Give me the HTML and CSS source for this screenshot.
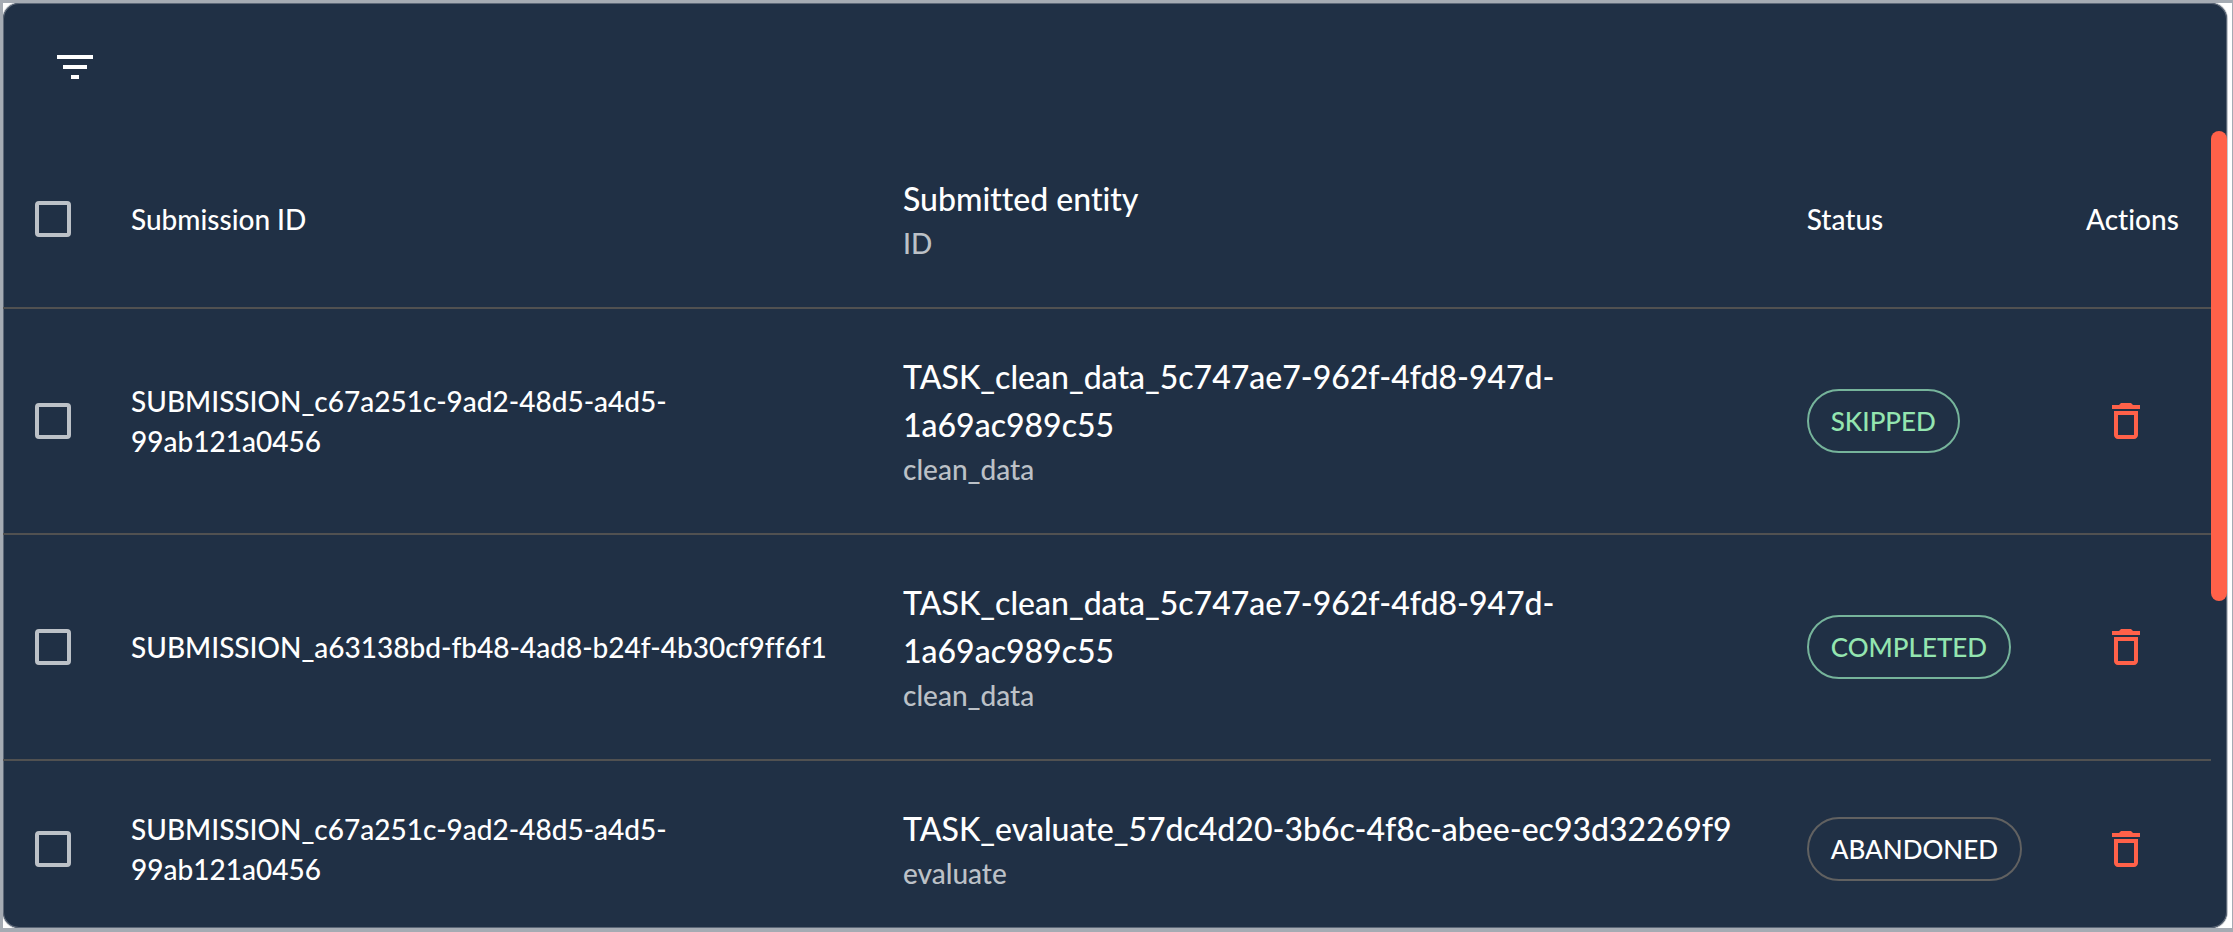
FILE: index.html
```
<!DOCTYPE html>
<html lang="en">
<head>
<meta charset="utf-8">
<title>Submissions</title>
<link rel="stylesheet" href="styles.css">
</head>
<body>
<svg class="sprite" aria-hidden="true">
  <symbol id="filter" viewBox="0 0 24 24"><path d="M10 18h4v-2h-4v2zM3 6v2h18V6H3zm3 7h12v-2H6v2z"/></symbol>
  <symbol id="trash" viewBox="0 0 24 24"><path d="M6 19c0 1.100.9 2 2 2h8c1.100 0 2-.9 2-2V7H6v12zM8 9h8v10H8V9zm7.500-5l-1-1h-5l-1 1H5v2h14V4z"/></symbol>
</svg>
<main class="card">
  <div class="toolbar">
    <button class="icon-button" type="button" aria-label="Filter list"><svg class="icon"><use href="#filter"/></svg></button>
  </div>
  <div class="scroller">
    <table class="table">
      <colgroup><col class="col-check"><col class="col-id"><col class="col-entity"><col class="col-status"><col class="col-actions"></colgroup>
      <thead>
        <tr>
          <th class="check-cell"><input class="checkbox" type="checkbox" aria-label="Select all submissions"></th>
          <th>Submission ID</th>
          <th><span class="primary">Submitted entity</span><span class="secondary">ID</span></th>
          <th>Status</th>
          <th>Actions</th>
        </tr>
      </thead>
      <tbody>
        <tr>
          <td class="check-cell"><input class="checkbox" type="checkbox" aria-label="Select submission 1"></td>
          <td>SUBMISSION_c67a251c-9ad2-48d5-a4d5-99ab121a0456</td>
          <td><span class="primary">TASK_clean_data_5c747ae7-962f-4fd8-947d-1a69ac989c55</span><span class="secondary">clean_data</span></td>
          <td><span class="chip chip-success">SKIPPED</span></td>
          <td><button class="icon-button danger" type="button" aria-label="Delete submission 1"><svg class="icon"><use href="#trash"/></svg></button></td>
        </tr>
        <tr>
          <td class="check-cell"><input class="checkbox" type="checkbox" aria-label="Select submission 2"></td>
          <td>SUBMISSION_a63138bd-fb48-4ad8-b24f-4b30cf9ff6f1</td>
          <td><span class="primary">TASK_clean_data_5c747ae7-962f-4fd8-947d-1a69ac989c55</span><span class="secondary">clean_data</span></td>
          <td><span class="chip chip-success">COMPLETED</span></td>
          <td><button class="icon-button danger" type="button" aria-label="Delete submission 2"><svg class="icon"><use href="#trash"/></svg></button></td>
        </tr>
        <tr>
          <td class="check-cell"><input class="checkbox" type="checkbox" aria-label="Select submission 3"></td>
          <td>SUBMISSION_c67a251c-9ad2-48d5-a4d5-99ab121a0456</td>
          <td><span class="primary">TASK_evaluate_57dc4d20-3b6c-4f8c-abee-ec93d32269f9</span><span class="secondary">evaluate</span></td>
          <td><span class="chip">ABANDONED</span></td>
          <td><button class="icon-button danger" type="button" aria-label="Delete submission 3"><svg class="icon"><use href="#trash"/></svg></button></td>
        </tr>
      </tbody>
    </table>
    <div class="scrollbar"><div class="thumb"></div></div>
  </div>
</main>
</body>
</html>
```
FILE: styles.css
```
* { box-sizing: border-box; }
html { background: #fff; }
body {
  margin: 0;
  height: 100vh;
  padding-right: 5px;
  border: solid #a5abb3;
  border-width: 3px 1px 4px 3px;
  overflow: hidden;
  background: #fff;
  color: #fff;
  font-family: Lato, Carlito, "Open Sans", sans-serif;
  font-size: 28px;
  font-variant-ligatures: none;
  font-weight: 500;
  line-height: 40px;
}
.sprite { display: none; }
.card {
  display: flex;
  flex-direction: column;
  height: 100%;
  overflow: hidden;
  border-radius: 16px;
  background: #203045;
  box-shadow: inset 0 0 0 1px #5c6777, 0 0 0 1px #c4c8cd;
}
.toolbar {
  display: flex;
  flex: none;
  align-items: center;
  height: 128px;
  padding: 0 48px;
}
.icon-button {
  display: block;
  padding: 0;
  border: 0;
  background: none;
  color: #fff;
  cursor: pointer;
}
.danger { margin-left: 16px; color: #ff6149; }
.icon { display: block; width: 48px; height: 48px; fill: currentColor; }
.scroller {
  display: flex;
  flex: 1;
  align-items: flex-start;
  min-height: 0;
  overflow: hidden;
}
.table { flex: 1; min-width: 0; table-layout: fixed; border-collapse: separate; border-spacing: 0; }
.col-check { width: 96px; }
.col-id { width: 772px; }
.col-status { width: 278px; }
.col-actions { width: 157px; }
.table th, .table td {
  padding: 44px 32px;
  border-bottom: 2px solid #515151;
  font-weight: inherit;
  text-align: left;
  vertical-align: middle;
}
.table .check-cell { padding: 0 0 0 32px; }
.checkbox {
  display: block;
  appearance: none;
  width: 36px;
  height: 36px;
  margin: 0;
  border: 4px solid #bcc1c7;
  border-radius: 4px;
}
.primary, .secondary { display: block; }
.primary { font-size: 32px; line-height: 48px; }
.secondary { color: #bcc1c7; }
.chip {
  display: block;
  width: fit-content;
  padding: 0 22px;
  border: 2px solid #616161;
  border-radius: 32px;
  font-size: 26px;
  line-height: 60px;
}
.chip-success { border-color: #76b49b; color: #94e5b0; }
.scrollbar { flex: none; width: 16px; height: 100%; }
.thumb { height: 59%; border-radius: 8px; background: #ff6149; }
```
